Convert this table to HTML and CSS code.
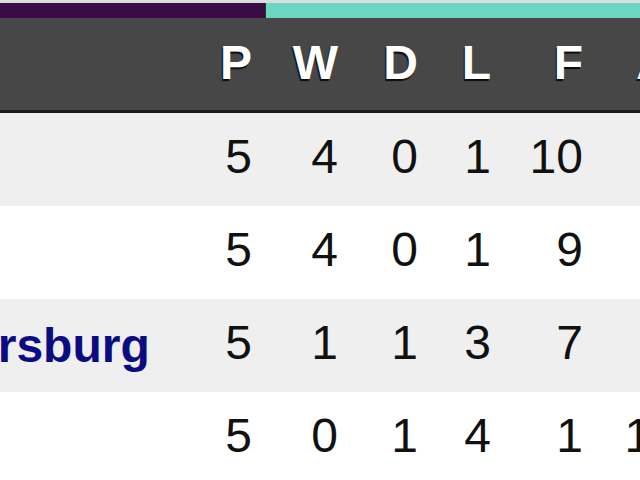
FILE: index.html
```html
<!DOCTYPE html>
<html>
<head>
<meta charset="utf-8">
<link rel="stylesheet" href="styles.css">
</head>
<body>
<div class="topbar"><div class="seg-purple"></div><div class="seg-teal"></div></div>
<div class="viewport">
  <div class="standings">
    <div class="row head">
      <div class="name"></div>
      <div class="num">P</div><div class="num">W</div><div class="num">D</div><div class="num">L</div><div class="num">F</div><div class="num ga">A</div>
    </div>
    <div class="row alt">
      <div class="name">Juventus</div>
      <div class="num">5</div><div class="num">4</div><div class="num">0</div><div class="num">1</div><div class="num">10</div><div class="num">3</div>
    </div>
    <div class="row">
      <div class="name">Chelsea</div>
      <div class="num">5</div><div class="num">4</div><div class="num">0</div><div class="num">1</div><div class="num">9</div><div class="num">1</div>
    </div>
    <div class="row alt">
      <div class="name link">Zenit St Petersburg</div>
      <div class="num">5</div><div class="num">1</div><div class="num">1</div><div class="num">3</div><div class="num">7</div><div class="num">8</div>
    </div>
    <div class="row">
      <div class="name">Malmö FF</div>
      <div class="num">5</div><div class="num">0</div><div class="num">1</div><div class="num">4</div><div class="num">1</div><div class="num">15</div>
    </div>
  </div>
</div>
</body>
</html>
```
FILE: styles.css
```css
html, body {
  margin: 0;
  padding: 0;
  width: 640px;
  height: 480px;
  overflow: hidden;
  background: #ffffff;
  font-family: "Liberation Sans", Arial, sans-serif;
}

.topbar {
  display: flex;
  height: 15px;
  border-top: 3px solid #dcdcdc;
}
.seg-purple {
  width: 265px;
  background: #3a0c46;
}
.seg-teal {
  flex: 1;
  background: #6dd6c0;
  border-left: 1px solid #1d3a34;
}

.viewport {
  width: 640px;
  overflow: hidden;
}

.standings {
  margin-left: -307px;
  width: 1100px;
}

.row {
  display: grid;
  grid-template-columns: 507px 73px 86px 80px 73px 92px 95px;
  align-items: center;
  height: 93px;
  font-size: 48px;
  color: #111111;
}

.row.head {
  height: 92px;
  background: #474747;
  border-bottom: 3px solid #1c1c1c;
  color: #ffffff;
  font-weight: bold;
  text-shadow: -1px 2px 1px rgba(0, 0, 0, 0.85);
}

.row.alt {
  background: #efefef;
}

.name {
  padding-left: 14px;
  white-space: nowrap;
  font-weight: bold;
}
.name.link {
  color: #0c0c82;
}

.num {
  text-align: right;
  padding-right: 21px;
  margin-top: -6px;
}
.head .num {
  margin-top: -4px;
}
.head .num.ga {
  text-align: left;
  padding-left: 32px;
}
```
